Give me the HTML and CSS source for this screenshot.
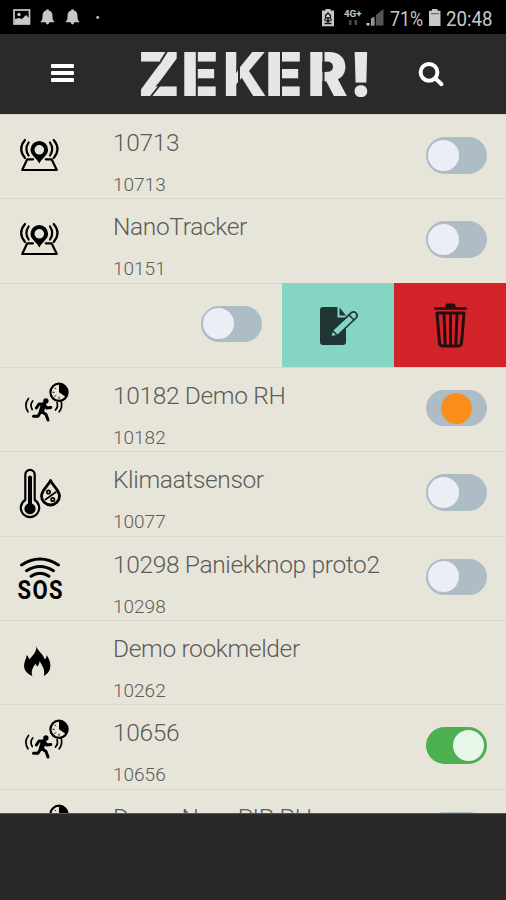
FILE: index.html
```html
<!DOCTYPE html>
<html lang="nl">
<head>
<meta charset="utf-8">
<title>ZEKER!</title>
<link rel="stylesheet" href="styles.css">
</head>
<body>
<svg class="defs" aria-hidden="true">
  <symbol id="tracker" viewBox="0 0 75 84">
    <path d="M39.3 27a8.800 8.800 0 0 0-8.800 8.800c0 5.500 6 8.200 8.800 13.700 2.800-5.500 8.800-8.200 8.800-13.700a8.800 8.800 0 0 0-8.800-8.800zm0 4a4.800 4.800 0 1 1 0 9.600 4.800 4.800 0 0 1 0-9.600z" fill-rule="evenodd"/>
    <path class="line" d="M33 45.300H27.200L22.200 56H56.800L51.600 45.300H45.800M28.600 28.500q-4.400 6.500 0 13M25 26q-7.600 9 0 18M50 28.500q4.400 6.500 0 13M53.700 26q7.600 9 0 18"/>
  </symbol>
  <symbol id="motion" viewBox="0 0 75 84">
    <circle class="line" cx="59" cy="25.300" r="8.600"/>
    <path d="M59 25.300V17a8.300 8.300 0 0 1 6.800 13z"/>
    <path d="M52.500 25.300h2M54.500 20.800l1.400 1.400M54.500 29.800l1.400-1.400M59 31.800v-2" stroke="#000"/>
    <circle cx="45.900" cy="34" r="2.700"/>
    <path d="M43.500 37.800L41.500 44" fill="none" stroke="#000" stroke-width="5.200" stroke-linecap="round"/>
    <path d="M44 37.200l-5-.2-2.600 4M44.500 38l2.300 3 4-.5M41.800 44.500l4.200 3 2 5.500M40.500 45l-2.500 4.200h-4.500" fill="none" stroke="#000" stroke-width="3" stroke-linecap="round" stroke-linejoin="round"/>
    <path class="line thin" d="M28.500 31.500q-5 6.500-.5 13.300M32.700 34q-3.200 4-.5 8.500M57 35.500q1.500 4-1.500 7.500M61.200 34.500q1.600 5.500-2 10.300"/>
  </symbol>
  <symbol id="climate" viewBox="0 0 75 84">
    <path class="line" d="M25.300 49V23.500a4.700 4.700 0 0 1 9.400 0V49a9.200 9.200 0 1 1-9.400 0z"/>
    <path d="M28 26.500a2 2 0 0 1 4 0V52.500a5.600 5.600 0 1 1-4 0z"/>
    <path class="line drop" d="M50.500 29.500c-2.500 5.500-9 9.700-9 15.500a9 9 0 0 0 18 0c0-5.800-6.500-10-9-15.500z"/>
    <path class="line thin" d="M45.500 48.500L56 41"/>
    <circle class="line thin" cx="48.500" cy="41" r="1.700"/><circle class="line thin" cx="52.800" cy="48.500" r="1.700"/>
  </symbol>
  <symbol id="sos" viewBox="0 0 75 84">
    <path d="M21.500 29q18.500-12 37 0M26.500 34.700q13.500-8.500 27 0M31 40.200q9-6 18 0" fill="none" stroke="#000" stroke-width="3" stroke-linecap="round"/>
    <text transform="translate(17.600 63) scale(.88 1)" class="sos-text" textLength="51">SOS</text>
  </symbol>
  <symbol id="fire" viewBox="0 0 75 84">
    <path d="M36.500 26c.8 5.500 6.800 7.500 8.300 13.500 1.300-1.300 1.800-2.800 1.900-4.500 3.300 5 4.300 9.500 3.400 13.300-.8 3.600-3 6-6.300 7.600 1.600-6.400-1.300-9.400-4.200-14.900-.2 3-1.200 4.500-2.500 5.500-.7-1-1.300-1.800-1.300-3-3.500 4.400-4.900 8-3.400 12.400-6.300-2.600-9.400-7.400-8-13 .8-3 2-4.700 2.200-7.900 1.600 1.200 2.200 2.700 2.500 4.400 3.800-4 7.500-7.400 7.400-13.400z"/>
  </symbol>
</svg>
<div class="status">
  <svg class="status-icons" width="110" height="34" viewBox="0 0 110 34">
    <rect x="14" y="10" width="15.500" height="14" fill="none" stroke="#c8c8c8" stroke-width="1.700"/>
    <path d="M15 24v-5l4-1 3 1 4-4 3 3v6z"/><circle cx="19" cy="14.500" r="1.700"/>
    <path id="bell" d="M47.500 9.200q1.400 0 1.400 1.400c2.900.8 3.600 3 3.600 5.900 0 3 .6 4.200 2.200 5.700H40.300c1.600-1.500 2.200-2.700 2.200-5.700 0-2.900.7-5.100 3.600-5.900q0-1.400 1.400-1.400zM45.500 22h4q-2 5-4 0z"/>
    <use href="#bell" x="25"/>
    <circle cx="97.700" cy="17.500" r="1.400"/>
  </svg>
  <svg class="status-info" width="190" height="34" viewBox="316 0 190 34">
    <path d="M325.500 9h5v1.500h3.500v15.700h-12V10.500h3.500z"/>
    <g stroke="#111" fill="none" stroke-width="1.300"><path d="M325.500 15.500l2.500-2.500 2.500 2.500v2.500h-5zM324 19.500l4 2 4-2M328 18v5M324.500 23.500h7"/></g>
    <text x="344" y="17" font-size="9" font-weight="700" textLength="17.500" lengthAdjust="spacingAndGlyphs">4G+</text>
    <path fill="#4a4a4a" d="M349 20h2.500v5H349zM354.500 20h2.500v5h-2.500z"/>
    <path d="M366.500 23h3v2.500h-3zM371 18.500h3.300v7H371z"/><path fill="#8a8a8a" d="M371.500 18l3-1.500v9h-3z"/><path fill="#555" d="M376 15l7.500-6v16.500H376z"/>
    <text x="390" y="25.500" font-size="21" textLength="33" lengthAdjust="spacingAndGlyphs">71%</text>
    <path d="M432 9h5.500v1.700h3V26h-11.500V10.700h3z"/><path d="M431 13.700h8" stroke="#555"/>
    <text x="446" y="25.500" font-size="21" textLength="46.500" lengthAdjust="spacingAndGlyphs">20:48</text>
  </svg>
</div>
<header class="bar">
  <div class="menu"><i></i><i></i><i></i></div>
  <svg class="logo" width="236" height="80" viewBox="136 34 236 80">
    <text class="logo-text" y="95.700" x="138 181.500 222.500 265.500 307.500 349.500">ZE<tspan class="narrow">K</tspan>ER!</text>
    <path class="cuts" d="M167.500 50.500l-7 11M160 85l-10 12.500M196.800 50v48M239 50v48M281 50v48M323.500 50v48"/>
  </svg>
  <svg class="search" width="30" height="30" viewBox="416 59 30 30"><circle cx="429" cy="72.300" r="8.400"/><path d="M435.500 78.500l6 5.700"/></svg>
</header>
<main class="list">
  <section class="row"><svg class="icon"><use href="#tracker"/></svg><div class="copy"><h2>10713</h2><p>10713</p></div><span class="toggle"></span></section>
  <section class="row"><svg class="icon"><use href="#tracker"/></svg><div class="copy"><h2>NanoTracker</h2><p>10151</p></div><span class="toggle"></span></section>
  <section class="row swiped"><span class="toggle"></span>
    <div class="action edit"><svg width="112" height="84" viewBox="0 0 112 84">
      <path d="M41 24h14.500v10.500H64V59q0 3-3 3H41q-3 0-3-3V27q0-3 3-3zM57.500 24.500l6.500 8h-6.500z" fill="#203634"/>
      <path d="M48.500 54l2-7 19-17.500q2.500-1.500 4.500.5t.5 4.500L55.500 52.500z" fill="#84d5c3" stroke="#203634" stroke-width="1.700"/><path d="M67 32l5 5M50.500 47.500l4.500 4.500" stroke="#203634" stroke-width="1.500"/>
    </svg></div>
    <div class="action delete"><svg width="112" height="84" viewBox="0 0 112 84" fill="none" stroke="#270d0e" stroke-linecap="round" stroke-linejoin="round">
      <path d="M41.500 25.500h30" stroke-width="2.700"/><path d="M52 24l1-2.500h7l1 2.500z" fill="#270d0e" stroke-width="2"/>
      <path d="M43 30h27L67.500 60q-.3 3-3.500 3H49q-3.200 0-3.500-3z" stroke-width="3"/><path d="M50 32l1.200 29M56.500 32v29M63 32l-1.200 29" stroke-width="3"/>
    </svg></div>
  </section>
  <section class="row"><svg class="icon"><use href="#motion"/></svg><div class="copy"><h2>10182 Demo RH</h2><p>10182</p></div><span class="toggle pending"></span></section>
  <section class="row"><svg class="icon"><use href="#climate"/></svg><div class="copy"><h2>Klimaatsensor</h2><p>10077</p></div><span class="toggle"></span></section>
  <section class="row"><svg class="icon"><use href="#sos"/></svg><div class="copy"><h2>10298 Paniekknop proto2</h2><p>10298</p></div><span class="toggle"></span></section>
  <section class="row"><svg class="icon"><use href="#fire"/></svg><div class="copy"><h2>Demo rookmelder</h2><p>10262</p></div></section>
  <section class="row"><svg class="icon"><use href="#motion"/></svg><div class="copy"><h2>10656</h2><p>10656</p></div><span class="toggle on"></span></section>
  <section class="row"><svg class="icon"><use href="#motion"/></svg><div class="copy"><h2>Demo NanoPIR RH</h2></div><span class="toggle"></span></section>
</main>
<footer></footer>
</body>
</html>
```

FILE: styles.css
```css
* { box-sizing: border-box; }
body {
  margin: 0;
  height: 900px;
  display: flex;
  flex-direction: column;
  overflow: hidden;
  background: #292929;
  font-family: Roboto, "Liberation Sans", sans-serif;
}
.defs { display: none; }
.status {
  height: 34px;
  flex: none;
  display: flex;
  justify-content: space-between;
  background: #000;
  fill: #c8c8c8;
}
.bar {
  height: 80px;
  flex: none;
  display: flex;
  align-items: flex-start;
  background: #2a2a2a;
}
.menu {
  width: 23px;
  margin: 29.500px 62px 0 51px;
  display: grid;
  gap: 3px;
}
.menu i { height: 4.300px; background: #fff; border-radius: 1px; }
.logo { flex: none; }
.logo-text { font: 900 60px Inter, Roboto, sans-serif; fill: #e6e6e6; }
.narrow { font-weight: 800; }
.cuts { stroke: #2a2a2a; stroke-width: 2; fill: none; }
.search { margin: 25px 0 0 44px; fill: none; stroke: #fff; stroke-width: 4; stroke-linecap: round; }
.list { height: 699px; flex: none; overflow: hidden; background: #e7e5da; }
.row {
  height: 84.330px;
  display: flex;
  align-items: flex-start;
  border-top: 1px solid #d8d6cb;
}
.icon { width: 75px; height: 84px; flex: none; margin: -1px 38px 0 0; }
.line { fill: none; stroke: #000; stroke-width: 2.200; stroke-linecap: round; stroke-linejoin: round; }
.thin { stroke-width: 1.700; }
.drop { stroke-width: 2.800; }
.sos-text { font: 700 25px Roboto, sans-serif; }
.copy { flex: 1; color: #5c5b57; font-weight: 300; white-space: nowrap; }
h2 { margin: 13px 0 0; font-size: 24.500px; line-height: 30px; font-weight: 300; letter-spacing: -.35px; }
p { margin: 15px 0 0; font-size: 19px; line-height: 24px; }
.toggle {
  width: 61.500px;
  height: 36.500px;
  flex: none;
  margin: 22px 19px 0 0;
  padding: 2.800px;
  display: flex;
  border-radius: 19px;
  background: #aebdc5;
}
.toggle::before { content: ""; width: 31px; height: 31px; border-radius: 50%; background: #e9eff4; }
.pending { justify-content: center; }
.pending::before { background: #f98e1c; }
.on { justify-content: flex-end; background: #4caf50; }
.on::before { background: #e8f5e9; }
.swiped { justify-content: flex-end; }
.swiped .toggle { margin-right: 20px; }
.action { width: 112px; height: 84.330px; flex: none; margin-top: -.6px; }
.edit { background: #84d5c3; }
.delete { background: #d2232a; }
footer { flex: 1; border-top: 1px solid #555; background: #292929; }
```
